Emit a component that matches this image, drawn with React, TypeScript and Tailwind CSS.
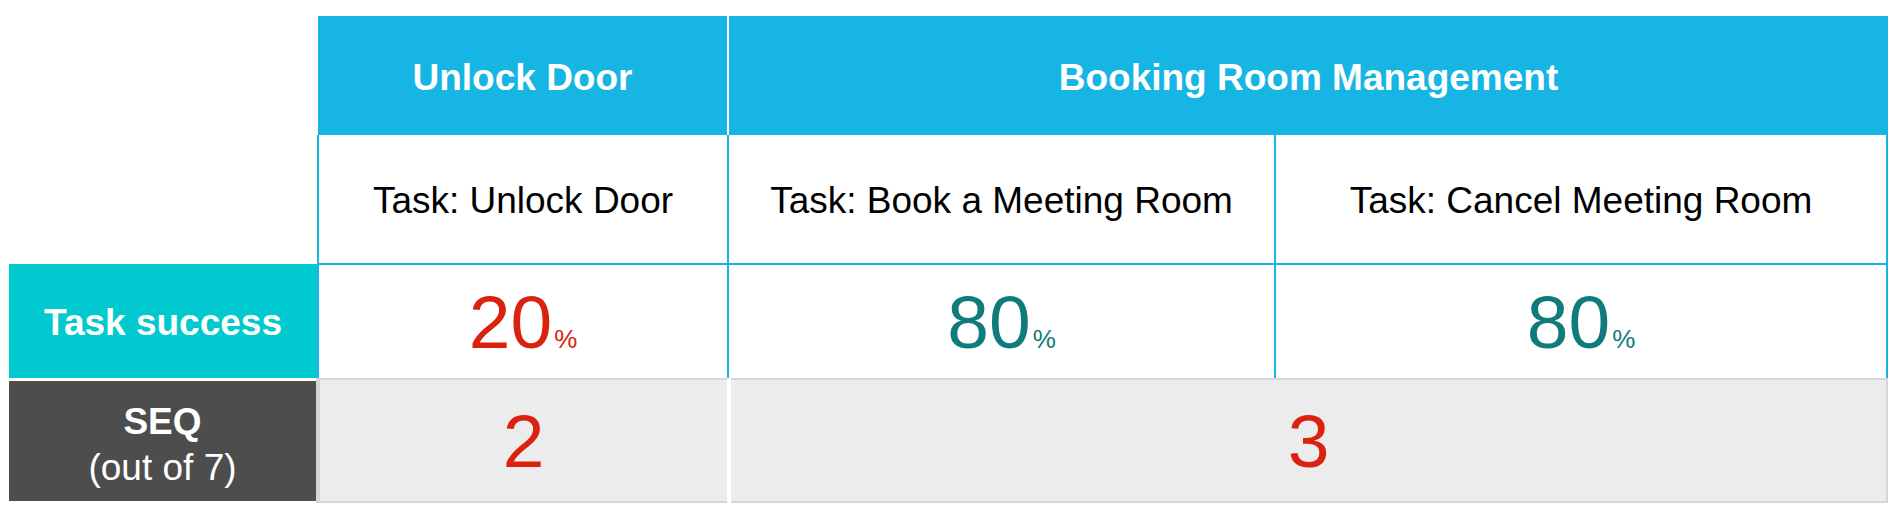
import React from "react";

const font = { fontFamily: '"Liberation Sans", Arial, sans-serif' };

function Pct({ value, color }: { value: string; color: string }) {
  return (
    <div className={`flex items-baseline justify-center pt-[2px] ${color}`}>
      <span className="text-[75px] leading-none">{value}</span>
      <span className="text-[26px] leading-none ml-[2px]">%</span>
    </div>
  );
}

export default function App() {
  return (
    <div className="w-[1902px] h-[510px] bg-white pl-[9px] pt-[16px]" style={font}>
      {/* Header row */}
      <div className="flex h-[119px]">
        <div className="w-[309px]" />
        <div className="w-[409px] bg-[#16b5e3] flex items-center justify-center pt-[4px] text-white font-bold text-[37px]">
          Unlock Door
        </div>
        <div className="w-[2px] bg-white" />
        <div className="w-[1159px] bg-[#16b5e3] flex items-center justify-center pt-[4px] text-white font-bold text-[37px]">
          Booking Room Management
        </div>
      </div>

      {/* Task row */}
      <div className="flex h-[130px]">
        <div className="w-[308px]" />
        <div className="w-[410px] border-l-2 border-b-2 border-[#1bb3e1] flex items-center justify-center pt-[3px] text-black text-[37px]">
          Task: Unlock Door
        </div>
        <div className="w-[547px] border-l-2 border-b-2 border-[#1bb3e1] flex items-center justify-center pt-[3px] text-black text-[37px]">
          Task: Book a Meeting Room
        </div>
        <div className="w-[614px] border-l-2 border-r-2 border-b-2 border-[#1bb3e1] flex items-center justify-center pt-[3px] text-black text-[37px]">
          Task: Cancel Meeting Room
        </div>
      </div>

      {/* Task success row */}
      <div className="flex h-[113px]">
        <div className="w-[308px] bg-[#00cacf] flex items-center justify-center pt-[3px] text-white font-bold text-[37px] -mt-[1px]">
          Task success
        </div>
        <div className="w-[410px] border-l-2 border-[#1bb3e1] flex items-center justify-center">
          <Pct value="20" color="text-[#d9230f]" />
        </div>
        <div className="w-[547px] border-l-2 border-[#1bb3e1] flex items-center justify-center">
          <Pct value="80" color="text-[#0f7b7b]" />
        </div>
        <div className="w-[614px] border-l-2 border-r-2 border-[#1bb3e1] flex items-center justify-center">
          <Pct value="80" color="text-[#0f7b7b]" />
        </div>
      </div>

      {/* SEQ row */}
      <div className="flex h-[125px]">
        <div className="w-[307px] mt-[3px] h-[120px] bg-[#4d4d4d] flex flex-col items-center justify-center pt-[8px] text-white text-[37px] leading-[46px]">
          <span className="font-bold">SEQ</span>
          <span className="font-normal">(out of 7)</span>
        </div>
        <div className="w-[411px] bg-[#ececec] border-t-2 border-b-2 border-l-4 border-[#d6d6d6] flex items-center justify-center pt-[2px]">
          <span className="text-[75px] leading-none text-[#d9230f]">2</span>
        </div>
        <div className="w-[4px] bg-white" />
        <div className="w-[1157px] bg-[#ececec] border-t-2 border-b-2 border-r-2 border-[#d6d6d6] flex items-center justify-center pt-[2px]">
          <span className="text-[75px] leading-none text-[#d9230f]">3</span>
        </div>
      </div>
    </div>
  );
}
